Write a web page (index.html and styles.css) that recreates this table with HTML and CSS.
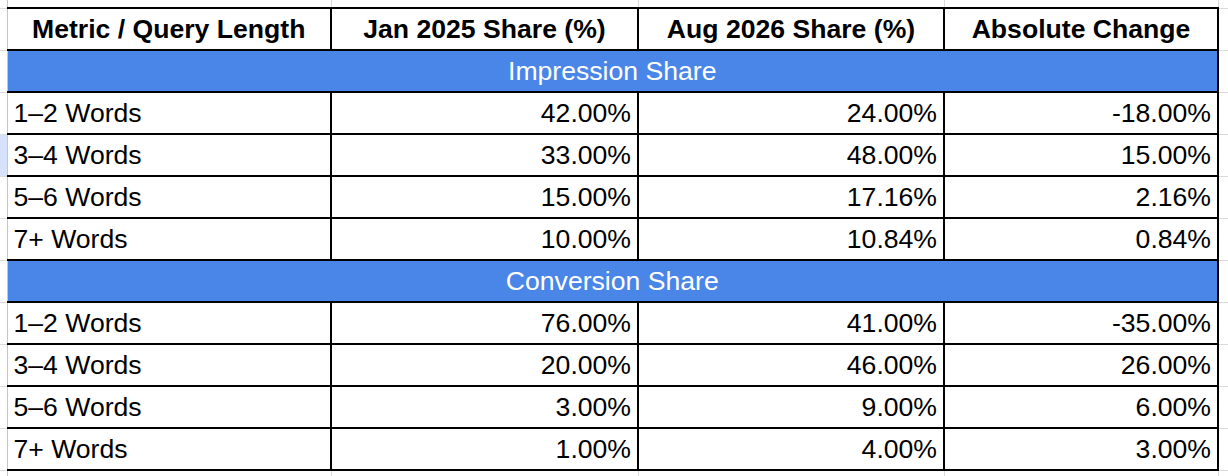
FILE: index.html
```html
<!DOCTYPE html>
<html lang="en">
<head>
<meta charset="utf-8">
<title>Query Length Share</title>
<link rel="stylesheet" href="styles.css">
</head>
<body>
<table class="sheet">
  <colgroup>
    <col class="w-gut-l">
    <col class="w-c1">
    <col class="w-c2">
    <col class="w-c3">
    <col class="w-c4">
    <col class="w-gut-r">
  </colgroup>
  <tr class="top-gutter">
    <td class="g"></td><td class="g"></td><td class="g"></td><td class="g"></td><td class="g"></td><td class="g"></td>
  </tr>
  <tr class="row">
    <td class="g"></td>
    <th class="c first">Metric / Query Length</th>
    <th class="c">Jan 2025 Share (%)</th>
    <th class="c">Aug 2026 Share (%)</th>
    <th class="c">Absolute Change</th>
    <td class="g"></td>
  </tr>
  <tr class="row">
    <td class="g"></td>
    <td class="c first section" colspan="4">Impression Share</td>
    <td class="g"></td>
  </tr>
  <tr class="row">
    <td class="g"></td>
    <td class="c first">1–2 Words</td><td class="c n">42.00%</td><td class="c n">24.00%</td><td class="c n">-18.00%</td>
    <td class="g"></td>
  </tr>
  <tr class="row">
    <td class="g sel"></td>
    <td class="c first">3–4 Words</td><td class="c n">33.00%</td><td class="c n">48.00%</td><td class="c n">15.00%</td>
    <td class="g"></td>
  </tr>
  <tr class="row">
    <td class="g"></td>
    <td class="c first">5–6 Words</td><td class="c n">15.00%</td><td class="c n">17.16%</td><td class="c n">2.16%</td>
    <td class="g"></td>
  </tr>
  <tr class="row">
    <td class="g"></td>
    <td class="c first">7+ Words</td><td class="c n">10.00%</td><td class="c n">10.84%</td><td class="c n">0.84%</td>
    <td class="g"></td>
  </tr>
  <tr class="row">
    <td class="g"></td>
    <td class="c first section" colspan="4">Conversion Share</td>
    <td class="g"></td>
  </tr>
  <tr class="row">
    <td class="g"></td>
    <td class="c first">1–2 Words</td><td class="c n">76.00%</td><td class="c n">41.00%</td><td class="c n">-35.00%</td>
    <td class="g"></td>
  </tr>
  <tr class="row">
    <td class="g"></td>
    <td class="c first">3–4 Words</td><td class="c n">20.00%</td><td class="c n">46.00%</td><td class="c n">26.00%</td>
    <td class="g"></td>
  </tr>
  <tr class="row">
    <td class="g"></td>
    <td class="c first">5–6 Words</td><td class="c n">3.00%</td><td class="c n">9.00%</td><td class="c n">6.00%</td>
    <td class="g"></td>
  </tr>
  <tr class="row">
    <td class="g"></td>
    <td class="c first">7+ Words</td><td class="c n">1.00%</td><td class="c n">4.00%</td><td class="c n">3.00%</td>
    <td class="g"></td>
  </tr>
  <tr class="bottom-gutter">
    <td class="g"></td><td class="g"></td><td class="g"></td><td class="g"></td><td class="g"></td><td class="g"></td>
  </tr>
</table>
</body>
</html>
```

FILE: styles.css
```css
html, body {
  margin: 0;
  padding: 0;
  background: #ffffff;
  overflow: hidden;
}

.sheet {
  border-collapse: collapse;
  table-layout: fixed;
  width: 1228px;
  font-family: "Liberation Sans", Arial, sans-serif;
  font-size: 26.6px;
  color: #000000;
}

.w-gut-l { width: 7px; }
.w-c1 { width: 324px; }
.w-c2 { width: 307px; }
.w-c3 { width: 306px; }
.w-c4 { width: 274px; }
.w-gut-r { width: 10px; }

.top-gutter td { height: 7px; }
.bottom-gutter td { height: 7px; }
.row td, .row th { height: 40px; }

.g {
  padding: 0;
  border: 1px solid #dadada;
  background: #ffffff;
}

.top-gutter .g { border-top: none; }
.bottom-gutter .g { border-bottom: none; }
.g:first-child { border-left: none; border-right-color: #c4c7c5; }
.g:last-child { border-right: none; }

.g.sel { background: #d6e2fb; }

.c {
  border: 2px solid #000000;
  padding: 0 6px;
  vertical-align: middle;
  white-space: nowrap;
  overflow: hidden;
  font-weight: normal;
  text-align: left;
  line-height: 30px;
}

.c.first { border-left: none; }

th.c {
  font-weight: bold;
  text-align: center;
}

.c.n { text-align: right; }

.c.section {
  background: #4a86e8;
  color: #ffffff;
  text-align: center;
}
```
